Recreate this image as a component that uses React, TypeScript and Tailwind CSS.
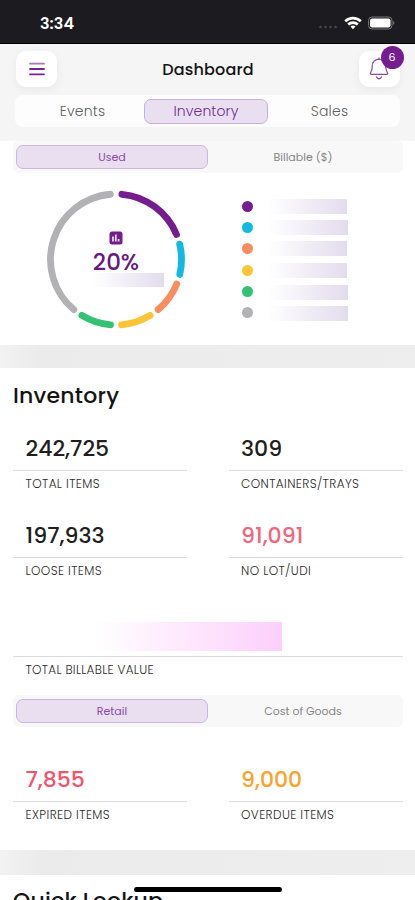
import React, { memo, useState } from 'react';

interface SegmentedProps {
  options: string[];
  value: string;
  onChange: (value: string) => void;
}

const Segmented = memo(({ options, value, onChange }: SegmentedProps) => (
  <div className="ml-[13px] mr-3 h-8 rounded-md bg-[#f8f8f8] flex items-center pl-[3px] pr-[5px]">
    {options.map((option) => (
      <button
        key={option}
        onClick={() => onChange(option)}
        className={
          option === value
            ? 'flex-1 h-6 rounded-[7px] border border-[#cbb6dc] bg-[#e9dff1] text-[11px] leading-none text-[#8a4aa5]'
            : 'flex-1 h-6 text-[11px] leading-none text-[#858585]'
        }
      >
        {option}
      </button>
    ))}
  </div>
));

interface StatProps {
  value: string;
  label: string;
  valueClass?: string;
}

const Stat = memo(({ value, label, valueClass = 'text-[#1f1f21]' }: StatProps) => (
  <div>
    <div className="h-[35px] border-b border-[#dcdcdc] pl-[12.5px] pt-px">
      <div className={`text-[22px] leading-6 font-medium ${valueClass}`}>{value}</div>
    </div>
    <div className="pl-[12.5px] pt-1">
      <div className="text-xs leading-[17px] tracking-[0.4px] font-light text-[#2c2c2c]">{label}</div>
    </div>
  </div>
));

const SEGMENTS = [
  { color: '#751d8f', from: 5.2, to: 67.5, bar: 'w-[79px]' },
  { color: '#12b9e0', from: 76.4, to: 103.2, bar: 'w-20' },
  { color: '#fb8c60', from: 112, to: 140, bar: 'w-[79px]' },
  { color: '#fcc436', from: 148.6, to: 175.2, bar: 'w-[79px] mt-px' },
  { color: '#33c173', from: 184.8, to: 211.4, bar: 'w-20 mt-[3px]' },
  { color: '#b2b2b4', from: 220, to: 355, bar: 'w-20 mt-px' },
];

const arc = (from: number, to: number) => {
  const r = 65.5;
  const point = (deg: number) => {
    const a = (deg * Math.PI) / 180;
    return `${70 + r * Math.sin(a)} ${70.5 - r * Math.cos(a)}`;
  };
  return `M${point(from)} A${r} ${r} 0 0 1 ${point(to)}`;
};

const Donut = () => (
  <div className="relative w-[140px] h-[140px]">
    <svg viewBox="0 0 140 140" className="w-full h-full" fill="none" strokeWidth="6.8" strokeLinecap="round">
      {SEGMENTS.map((s) => (
        <path key={s.color} d={arc(s.from, s.to)} stroke={s.color} />
      ))}
    </svg>
    <div className="absolute inset-0 flex flex-col items-center pt-[42px]">
      <svg width="14" height="14" viewBox="0 0 14 14">
        <rect x="0.5" y="0.5" width="13" height="13" rx="2.5" fill="#751d8f" />
        <path d="M4 5.5v5M6.8 3.5v7M9.6 8v2.5" stroke="#f3e6f7" strokeWidth="1.7" />
      </svg>
      <div className="mt-[3px] text-[23px] leading-7 font-medium text-[#67197f]">20%</div>
      <div className="-mt-[3px] ml-6 w-[72px] h-3.5 bg-linear-to-r from-white to-[#e3dced]" />
    </div>
  </div>
);

const StatusBar = () => (
  <div className="h-11 shrink-0 bg-[#1c1b20] border-b border-black flex items-start justify-between pl-10 pr-5">
    <span className="pt-3.5 text-base leading-5 font-semibold text-white">3:34</span>
    <div className="flex items-center pt-4">
      <svg width="20" height="4" viewBox="0 0 20 4" className="mt-[7px]" fill="#47464b">
        <circle cx="2.5" cy="2" r="1.3" />
        <circle cx="7.5" cy="2" r="1.3" />
        <circle cx="12.5" cy="2" r="1.3" />
        <circle cx="17.5" cy="2" r="1.3" />
      </svg>
      <svg width="18" height="14" viewBox="0 0 18 14" className="ml-1.5" fill="none" stroke="#fff" strokeWidth="2.6">
        <path d="M1.2 5.3a11.2 11.2 0 0 1 15.6 0" />
        <path d="M4.2 8.5a7 7 0 0 1 9.6 0" />
        <path d="M6.5 10.6a3.8 3.8 0 0 1 5 0L9 13.2z" fill="#fff" stroke="none" />
      </svg>
      <svg width="27" height="14" viewBox="0 0 27 14" className="ml-1.5">
        <rect x="0.5" y="1" width="23.5" height="12" rx="3.5" fill="none" stroke="#77767a" />
        <rect x="2" y="2.5" width="20.5" height="9" rx="2" fill="#fff" />
        <path d="M25.2 5v4c1.6-.6 1.6-3.4 0-4z" fill="#77767a" />
      </svg>
    </div>
  </div>
);

export default function App() {
  const [tab, setTab] = useState('Inventory');
  const [mode, setMode] = useState('Used');
  const [pricing, setPricing] = useState('Retail');

  return (
    <div className="relative w-[415px] h-[900px] overflow-hidden flex flex-col bg-white font-[Poppins,Inter,sans-serif]">
      <StatusBar />

      <header className="h-[97px] shrink-0 bg-[#f5f5f5] px-[15px] pt-[7px]">
        <div className="flex items-center justify-between pl-px">
          <button className="w-[41px] h-9 rounded-[10px] bg-white shadow-[0_3px_10px_rgba(0,0,0,0.05)] flex items-center justify-center">
            <svg width="16" height="14" viewBox="0 0 16 14" strokeWidth="1.8" strokeLinecap="round">
              <path d="M1 1.7h14" stroke="#a777b7" />
              <path d="M1 7h14M1 12.3h14" stroke="#7d2196" />
            </svg>
          </button>
          <h1 className="mt-0.5 text-base leading-5 tracking-[0.15px] font-medium text-[#141416]">Dashboard</h1>
          <button className="relative w-[41px] h-9 rounded-[10px] bg-white shadow-[0_3px_10px_rgba(0,0,0,0.05)]">
            <svg width="22" height="24" viewBox="0 0 22 24" className="ml-[9px] -mt-[3px]" fill="none" stroke="#8c49a0" strokeWidth="1.2" strokeLinecap="round" strokeLinejoin="round">
              <path d="M11 1.8v1.6M3.4 18.4h15.2c1 0 1.3-.9.8-1.8-1-1.7-1.6-2.9-1.6-5V10a6.8 6.8 0 0 0-13.6 0v1.6c0 2.1-.6 3.3-1.6 5-.5.9-.2 1.8.8 1.8z" />
              <path d="M8.5 20.8c.4 1.2 1.3 2 2.5 2s2.1-.8 2.5-2" />
            </svg>
            <span className="absolute left-[21.5px] -top-[5px] w-[23px] h-[23px] rounded-full bg-[#751d8f] text-white text-[11px] flex items-center justify-center">
              6
            </span>
          </button>
        </div>
        <nav className="mt-2 h-8 rounded-lg bg-[#fdfdfd] flex items-center pl-1.5 pr-[9px]">
          {['Events', 'Inventory', 'Sales'].map((name) => (
            <button
              key={name}
              onClick={() => setTab(name)}
              className={
                name === tab
                  ? 'w-[124px] h-[25px] rounded-[7px] border border-[#c8b0da] bg-[#e9dff1] text-sm leading-none tracking-[0.1px] font-light text-[#6f2b8e]'
                  : 'flex-1 h-6 text-sm leading-none tracking-[0.2px] font-light text-[#5e5e5e]'
              }
            >
              {name}
            </button>
          ))}
        </nav>
      </header>

      <section className="h-[204px] shrink-0">
        <Segmented options={['Used', 'Billable ($)']} value={mode} onChange={setMode} />
        <div className="flex pl-[46px] pt-4">
          <Donut />
          <ul className="ml-14 pt-[7px]">
            {SEGMENTS.map((s) => (
              <li key={s.color} className="h-[21.2px] flex items-center">
                <span className="w-[11px] h-[11px] rounded-full" style={{ backgroundColor: s.color }} />
                <span className={`ml-[15px] h-[15px] bg-linear-to-r from-white to-[#e3dced] ${s.bar}`} />
              </li>
            ))}
          </ul>
        </div>
      </section>

      <div className="h-[23px] shrink-0 bg-linear-to-r from-[#f2f2f2] via-[#ebebeb] via-10% to-[#eeeeee]" />

      <section className="h-[482px] shrink-0 pt-3.5">
        <h2 className="pl-[13px] text-[22px] leading-7 tracking-[0.25px] font-medium text-[#141416]">Inventory</h2>
        <div className="mt-[26px] pl-[13px] pr-3 grid grid-cols-[174px_174px] gap-x-[41.5px] gap-y-[31px]">
          <Stat value="242,725" label="TOTAL ITEMS" />
          <Stat value="309" label="CONTAINERS/TRAYS" />
          <Stat value="197,933" label="LOOSE ITEMS" />
          <Stat value="91,091" label="NO LOT/UDI" valueClass="text-[#f2667b]" />
        </div>
        <div className="ml-[13px] mr-3 mt-[43px]">
          <div className="h-[35px] border-b border-[#dcdcdc]">
            <div className="ml-[82px] w-[187px] h-[29px] bg-linear-to-r from-white to-[#fccffb]" />
          </div>
          <div className="pl-[12.5px] pt-1 text-xs leading-[18px] tracking-[0.3px] font-light text-[#2c2c2c]">TOTAL BILLABLE VALUE</div>
        </div>
        <div className="mt-4">
          <Segmented options={['Retail', 'Cost of Goods']} value={pricing} onChange={setPricing} />
        </div>
        <div className="mt-10 pl-[13px] pr-3 grid grid-cols-[174px_174px] gap-x-[41.5px]">
          <Stat value="7,855" label="EXPIRED ITEMS" valueClass="text-[#f2546b]" />
          <Stat value="9,000" label="OVERDUE ITEMS" valueClass="text-[#fba22b]" />
        </div>
      </section>

      <div className="h-[25px] shrink-0 bg-linear-to-r from-[#f2f2f2] via-[#ebebeb] via-10% to-[#eeeeee]" />

      <section className="pl-[13px] pt-3">
        <h2 className="text-[22px] leading-7 tracking-[0.2px] font-medium text-[#141416]">Quick Lookup</h2>
      </section>

      <div className="absolute left-[134px] top-[887px] w-[148px] h-[5px] rounded-full bg-black" />
    </div>
  );
}
